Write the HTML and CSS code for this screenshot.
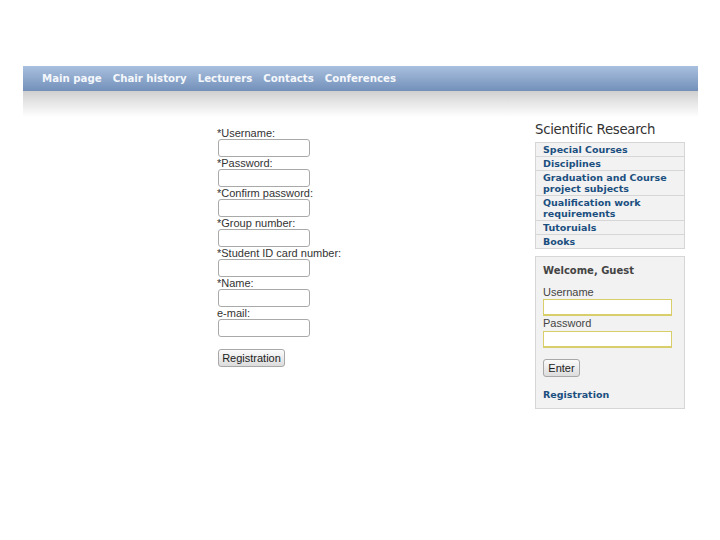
FILE: index.html
```html
<!DOCTYPE html>
<html>
<head>
<meta charset="utf-8">
<link rel="stylesheet" href="styles.css">
</head>
<body>
<div class="page">
  <nav class="nav">
    <a class="nav-item">Main page</a>
    <a class="nav-item">Chair history</a>
    <a class="nav-item">Lecturers</a>
    <a class="nav-item">Contacts</a>
    <a class="nav-item">Conferences</a>
  </nav>
  <div class="shade"></div>
  <div class="content">
    <form class="reg-form">
      <div class="field"><label>*Username:</label><input type="text"></div>
      <div class="field"><label>*Password:</label><input type="password"></div>
      <div class="field"><label>*Confirm password:</label><input type="password"></div>
      <div class="field"><label>*Group number:</label><input type="text"></div>
      <div class="field"><label>*Student ID card number:</label><input type="text"></div>
      <div class="field"><label>*Name:</label><input type="text"></div>
      <div class="field"><label>e-mail:</label><input type="text"></div>
      <button type="button" class="btn reg-btn">Registration</button>
    </form>
    <aside class="sidebar">
      <h2 class="side-title">Scientific Research</h2>
      <ul class="side-menu">
        <li><a>Special Courses</a></li>
        <li><a>Disciplines</a></li>
        <li><a>Graduation and Course project subjects</a></li>
        <li><a>Qualification work requirements</a></li>
        <li><a>Tutoruials</a></li>
        <li><a>Books</a></li>
      </ul>
      <div class="login">
        <div class="welcome">Welcome, Guest</div>
        <label class="login-label">Username</label>
        <input class="login-input" type="text">
        <label class="login-label pass-label">Password</label>
        <input class="login-input" type="password">
        <button type="button" class="btn enter-btn">Enter</button>
        <a class="login-link">Registration</a>
      </div>
    </aside>
  </div>
</div>
</body>
</html>
```

FILE: styles.css
```css
html, body {
  margin: 0;
  padding: 0;
  background: #fff;
}
.page {
  margin-left: 23px;
  width: 675px;
  padding-top: 66px;
  font-family: "Liberation Sans", Arial, sans-serif;
}
.nav {
  box-sizing: border-box;
  height: 25px;
  background: linear-gradient(to bottom, #a9c1df 0%, #8ea8cc 50%, #7390ba 100%);
  display: flex;
  align-items: center;
  padding-left: 19px;
  padding-bottom: 1px;
  gap: 11px;
}
.nav-item {
  font-family: "DejaVu Sans", Verdana, sans-serif;
  font-weight: bold;
  font-size: 10.2px;
  color: #f4f7fb;
  white-space: nowrap;
}
.shade {
  height: 26px;
  background: linear-gradient(to bottom, #cfcfcf 0%, #e6e6e6 45%, #ffffff 100%);
}
.content {
  display: flex;
  align-items: flex-start;
}
.reg-form {
  margin: 0;
  padding-left: 194px;
  padding-top: 10px;
  width: 318px;
  flex: none;
}
.field {
  display: flex;
  flex-direction: column;
  align-items: flex-start;
  height: 30px;
}
.field label {
  font-size: 11px;
  color: #333;
  line-height: 12px;
  white-space: nowrap;
}
.field input {
  box-sizing: border-box;
  width: 92px;
  height: 18px;
  margin: 0 0 0 1px;
  border: 1px solid #a9a9a9;
  border-radius: 3px;
  background: #fff;
  padding: 0;
}
.btn {
  font-family: "Liberation Sans", Arial, sans-serif;
  font-size: 11px;
  color: #222;
  background: linear-gradient(to bottom, #fbfbfb 0%, #ececec 50%, #dcdcdc 100%);
  border: 1px solid #a8a8a8;
  border-radius: 3px;
  padding: 0;
  height: 18px;
}
.reg-btn {
  margin: 12px 0 0 1px;
  width: 67px;
}
.sidebar {
  width: 150px;
  flex: none;
}
.side-title {
  margin: 5px 0 0 0;
  font-family: "DejaVu Sans", Verdana, sans-serif;
  font-weight: normal;
  font-size: 13.3px;
  color: #333;
  line-height: 16px;
  letter-spacing: -0.3px;
}
.side-menu {
  list-style: none;
  margin: 4px 0 0 0;
  padding: 0;
  border: 1px solid #d6d6d6;
  background: #f2f2f2;
}
.side-menu li {
  border-top: 1px solid #d6d6d6;
  padding: 1px 7px 1px 7px;
}
.side-menu li:first-child {
  border-top: none;
}
.side-menu a {
  font-family: "DejaVu Sans", Verdana, sans-serif;
  font-weight: bold;
  font-size: 9.5px;
  line-height: 11px;
  color: #1b4f80;
  display: block;
}
.login {
  margin-top: 7px;
  border: 1px solid #d6d6d6;
  background: #f2f2f2;
  padding: 7px 12px 7px 7px;
  display: flex;
  flex-direction: column;
  align-items: flex-start;
}
.welcome {
  font-family: "DejaVu Sans", Verdana, sans-serif;
  font-weight: bold;
  font-size: 10px;
  color: #444;
  line-height: 13px;
}
.login-label {
  font-size: 11px;
  color: #444;
  margin-top: 9px;
  line-height: 12px;
}
.pass-label {
  margin-top: 1px;
}
.login-label + .login-input {
  margin-top: 1px;
}
.pass-label + .login-input {
  margin-top: 2px;
}
.login-input {
  box-sizing: border-box;
  width: 129px;
  height: 17px;
  border: 1px solid #d8cf6a;
  border-bottom-width: 2px;
  background: #fff;
  padding: 0;
  margin: 0;
}
.enter-btn {
  margin-top: 11px;
  width: 37px;
}
.login-link {
  margin-top: 12px;
  font-family: "DejaVu Sans", Verdana, sans-serif;
  font-weight: bold;
  font-size: 9.5px;
  line-height: 12px;
  color: #1b4f80;
}
```
